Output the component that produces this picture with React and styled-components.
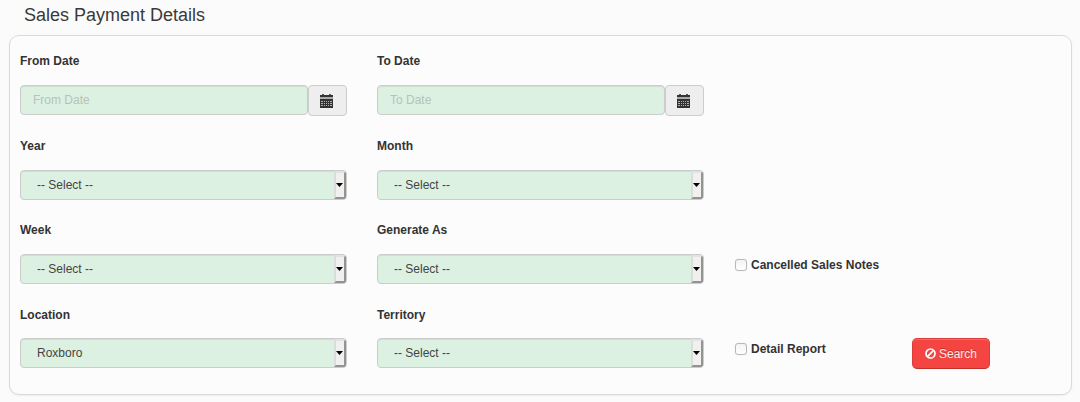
import React from "react";
import styled, { createGlobalStyle } from "styled-components";

const GlobalStyle = createGlobalStyle`
  * { box-sizing: border-box; }
  body {
    margin: 0;
    background: #fbfbfb;
    color: #333;
    font: 12px/20px "Liberation Sans", Arial, sans-serif;
    overflow: hidden;
  }
`;

const Page = styled.main`
  height: 402px;
  padding: 0 8px 0 9px;
`;

const Title = styled.h1`
  margin: 0;
  height: 35px;
  padding: 5px 0 0 15px;
  font-size: 18px;
  line-height: 20px;
  font-weight: 400;
  color: #393939;
`;

const Panel = styled.form`
  height: 360px;
  padding: 15px 10px 0;
  border: 1px solid #dadada;
  border-radius: 10px;
  background: #fcfcfc;
  box-shadow: 0 1px 2px rgba(0, 0, 0, 0.06);
  display: grid;
  grid-template-columns: 327px 327px 147px 1fr;
  grid-template-rows: 85px 84px 85px 83px;
  column-gap: 30px;
`;

const Field = styled.div`
  grid-column: ${(p) => p.$col};
  grid-row: ${(p) => p.$row};
  display: flex;
  flex-direction: column;
`;

const Label = styled.label`
  height: ${(p) => p.$height || 34}px;
  font-weight: 700;
  line-height: 20px;
`;

const InputGroup = styled.div`
  display: flex;
  align-items: flex-start;
`;

const DateInput = styled.input`
  width: 288px;
  height: 30px;
  padding: 0 12px;
  border: 1px solid #ccc;
  border-radius: 4px;
  outline: none;
  background: #ddf1e2;
  box-shadow: inset 0 1px 1px rgba(0, 0, 0, 0.075);
  font: inherit;
  color: #444;
  &::placeholder { color: #b5c3b9; opacity: 1; }
`;

const CalendarButton = styled.button`
  width: 39px;
  height: 31px;
  padding: 1px 2px 0 0;
  border: 1px solid #ccc;
  border-radius: 4px;
  background: #eee;
  display: flex;
  align-items: center;
  justify-content: center;
`;

const SelectBox = styled.div`
  width: 327px;
  height: 30px;
  border: 1px solid #ccc;
  border-radius: 4px;
  background: #ddf1e2;
  box-shadow: inset 0 1px 1px rgba(0, 0, 0, 0.075);
  display: flex;
  overflow: hidden;
  color: #444;
`;

const SelectValue = styled.span`
  flex: 1;
  padding-left: 16px;
  line-height: 28px;
`;

const Arrow = styled.span`
  width: 12px;
  height: 28px;
  border: 2px solid;
  border-color: #e2e2e2 #939393 #939393 #dcdcdc;
  background: #f1f0ef;
  display: flex;
  align-items: center;
  justify-content: flex-start;
`;

const CheckLabel = styled.label`
  grid-column: 3;
  grid-row: ${(p) => p.$row};
  align-self: start;
  height: 20px;
  margin: ${(p) => p.$top}px 0 0 1px;
  display: flex;
  align-items: center;
  gap: 4px;
  font-weight: 700;
  white-space: nowrap;
`;

const Checkbox = styled.input`
  appearance: none;
  width: 12px;
  height: 12px;
  margin: 0;
  border: 1px solid #b8b8b8;
  border-radius: 3px;
  background: linear-gradient(#f3f3f3, #fff);
  box-shadow: 0 0 1px rgba(0, 0, 0, 0.15);
`;

const SearchButton = styled.button`
  grid-column: 4;
  grid-row: 4;
  width: 78px;
  height: 31px;
  margin-top: 33px;
  margin-left: 1px;
  padding: 0;
  border: 1px solid #dc3d39;
  border-bottom-color: #c42e2b;
  border-radius: 5px;
  background: #f44542;
  box-shadow: inset 0 1px 0 rgba(255, 255, 255, 0.2);
  color: #ffe9e8;
  font: inherit;
  text-shadow: 0 -1px 0 rgba(0, 0, 0, 0.25);
  display: flex;
  align-items: center;
  justify-content: center;
  gap: 3px;
`;

const CalendarIcon = () => (
  <svg width="13" height="14" viewBox="0 0 13 14" shapeRendering="crispEdges" aria-hidden="true">
    <path fill="#555" d="M2 0h2v1H2zM9 0h2v1H9z" />
    <path fill="#333" d="M0 1h13v2H0z" />
    <path fill="#aaa" d="M0 3h13v2H0z" />
    <path fill="#333" d="M0 5h13v9H0z" />
    <path
      fill="#b0b0b0"
      d="M1 7h2v1H1zM4 7h1v1H4zM6 7h1v1H6zM8 7h1v1H8zM10 7h2v1h-2zM1 9h2v1H1zM4 9h1v1H4zM6 9h1v1H6zM8 9h1v1H8zM10 9h2v1h-2zM1 11h2v1H1zM4 11h1v1H4zM6 11h1v1H6zM8 11h1v1H8zM10 11h2v1h-2z"
    />
  </svg>
);

const BanIcon = () => (
  <svg width="11" height="11" viewBox="0 0 11 11" fill="none" stroke="#fff" strokeWidth="1.7" aria-hidden="true">
    <circle cx="5.5" cy="5.5" r="4.5" />
    <path d="M2.4 8.6l6.2-6.2" />
  </svg>
);

const DateField = ({ label, col }) => (
  <Field $col={col} $row={1}>
    <Label>{label}</Label>
    <InputGroup>
      <DateInput placeholder={label} />
      <CalendarButton type="button" aria-label={label}>
        <CalendarIcon />
      </CalendarButton>
    </InputGroup>
  </Field>
);

const SelectField = ({ label, col, row, labelHeight, value = "-- Select --" }) => (
  <Field $col={col} $row={row}>
    <Label $height={labelHeight}>{label}</Label>
    <SelectBox>
      <SelectValue>{value}</SelectValue>
      <Arrow>
        <svg width="7" height="4" viewBox="0 0 7 4" aria-hidden="true">
          <path d="M0 0h7L3.5 4z" fill="#000" />
        </svg>
      </Arrow>
    </SelectBox>
  </Field>
);

export default function App() {
  return (
    <Page>
      <GlobalStyle />
      <Title>Sales Payment Details</Title>
      <Panel>
        <DateField label="From Date" col={1} />
        <DateField label="To Date" col={2} />
        <SelectField label="Year" col={1} row={2} />
        <SelectField label="Month" col={2} row={2} />
        <SelectField label="Week" col={1} row={3} />
        <SelectField label="Generate As" col={2} row={3} />
        <CheckLabel $row={3} $top={35}>
          <Checkbox type="checkbox" />
          Cancelled Sales Notes
        </CheckLabel>
        <SelectField label="Location" col={1} row={4} labelHeight={33} value="Roxboro" />
        <SelectField label="Territory" col={2} row={4} labelHeight={33} />
        <CheckLabel $row={4} $top={34}>
          <Checkbox type="checkbox" />
          Detail Report
        </CheckLabel>
        <SearchButton type="button">
          <BanIcon />
          Search
        </SearchButton>
      </Panel>
    </Page>
  );
}
